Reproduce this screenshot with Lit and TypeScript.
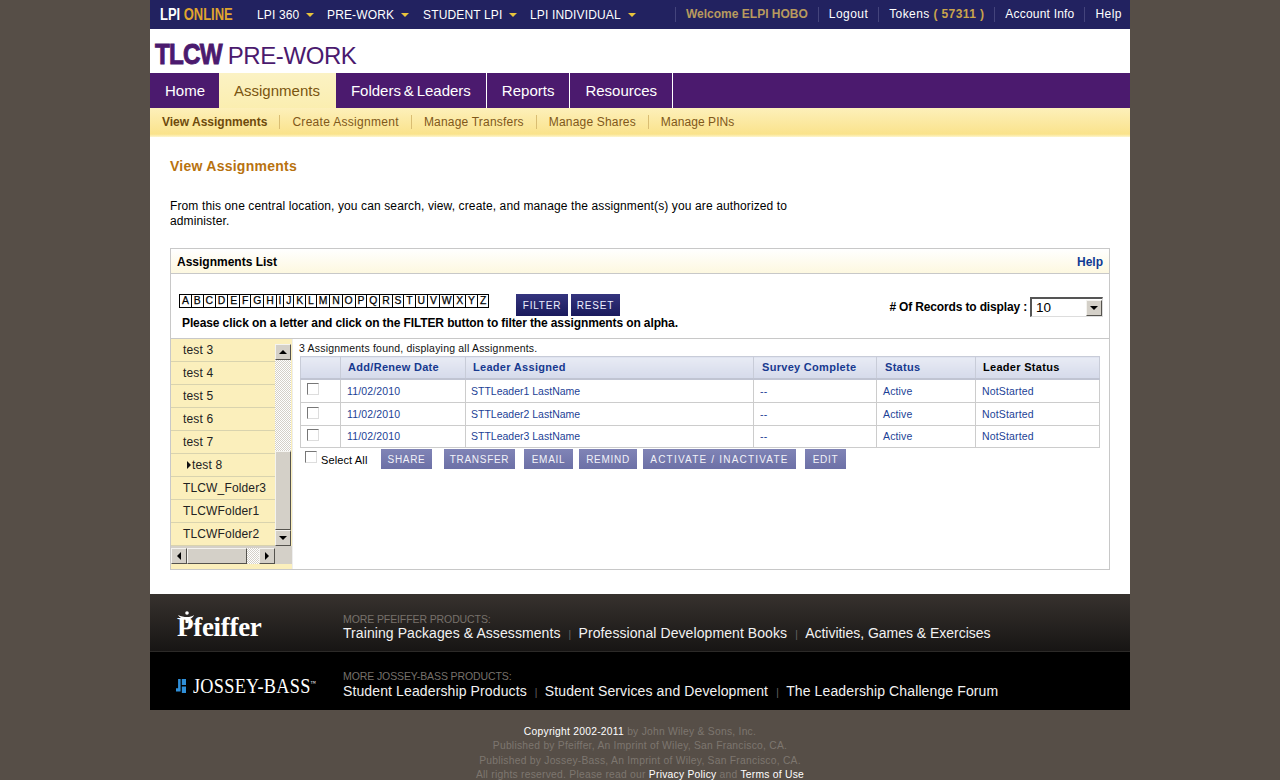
import { css, html, LitElement } from "lit";
import { customElement } from "lit/decorators.js";

const LETTERS = "ABCDEFGHIJKLMNOPQRSTUVWXYZ".split("");
const FOLDERS = ["test 3", "test 4", "test 5", "test 6", "test 7", "test 8", "TLCW_Folder3", "TLCWFolder1", "TLCWFolder2"];
const LEADERS = ["STTLeader1 LastName", "STTLeader2 LastName", "STTLeader3 LastName"];

@customElement("app-root")
export class AppRoot extends LitElement {
	static override styles = css`
		:host {
			display: block;
			height: 780px;
			overflow: hidden;
			background: #564e47;
			font-family: "Liberation Sans", Arial, sans-serif;
			font-size: 12px;
			color: #000;
		}

		.page {
			width: 980px;
			margin-left: 150px;
		}

		/* top bar */
		.topbar {
			height: 29px;
			background: #222260;
			display: flex;
			align-items: center;
			color: #fff;
			letter-spacing: 0.45px;
		}
		.brand {
			width: 107px;
			flex: none;
			padding-left: 10px;
			box-sizing: border-box;
			white-space: nowrap;
		}
		.brand span {
			display: inline-block;
			font-weight: bold;
			font-size: 16px;
			letter-spacing: 0;
			transform: scaleX(0.81);
			transform-origin: left center;
		}
		.brand b {
			color: #e0a52e;
		}
		.topnav {
			display: flex;
			width: 418px;
			flex: none;
			letter-spacing: 0.15px;
		}
		.topnav span {
			display: flex;
			align-items: center;
			white-space: nowrap;
		}
		.topnav span:nth-child(1) { width: 70px; }
		.topnav span:nth-child(2) { width: 96px; }
		.topnav span:nth-child(3) { width: 107px; }
		.caret {
			width: 0;
			height: 0;
			margin-left: 7px;
			border: 4.5px solid transparent;
			border-top: 4.5px solid #e8c33c;
			border-bottom: 0;
		}
		.topright {
			display: flex;
			align-items: center;
			white-space: nowrap;
		}
		.topright span {
			padding: 0 10px;
			border-left: 1px solid #44447c;
			line-height: 15px;
		}
		.topright .welcome {
			color: #b89a5e;
			font-weight: bold;
			letter-spacing: 0;
		}
		.topright .tokens {
			letter-spacing: 0.4px;
		}
		.topright .account {
			letter-spacing: 0.2px;
		}
		.topright em {
			font-style: normal;
			font-weight: bold;
			color: #c9a44c;
		}

		/* logo strip */
		.logo {
			height: 44px;
			background: #fff;
			display: flex;
			align-items: baseline;
			padding: 8px 0 0 5px;
			box-sizing: border-box;
			color: #4b1a6e;
			white-space: nowrap;
		}
		.logo b {
			display: inline-block;
			font-size: 30px;
			letter-spacing: -1px;
			margin-right: -10px;
			-webkit-text-stroke: 1px #4b1a6e;
			transform: scaleX(0.807);
			transform-origin: left center;
		}
		.logo span {
			font-size: 24px;
			letter-spacing: -0.4px;
		}

		/* main nav */
		.nav {
			height: 35px;
			background: #4b1a6e;
			display: flex;
		}
		.nav a {
			color: #fff;
			font-size: 15px;
			line-height: 35px;
			padding: 0 15px;
			word-spacing: -1.3px;
			border-right: 1px solid #fff;
		}
		.nav a.home {
			border-right: 0;
			padding-right: 14px;
		}
		.nav a.active {
			border-right: 0;
			padding-right: 16px;
			color: #7a5510;
			background: linear-gradient(#fbf2c4, #fbeeb0);
		}
		.subnav {
			height: 29px;
			display: flex;
			align-items: center;
			padding: 0 0 2px 12px;
			box-sizing: border-box;
			background: linear-gradient(#fdf0ba 0, #fae38c 90%, #fdf6cf 100%);
			color: #80581a;
			white-space: nowrap;
		}
		.subnav span {
			padding-right: 12px;
			margin-right: 12px;
			border-right: 1px solid #d9bd72;
			line-height: 14px;
			letter-spacing: 0.12px;
		}
		.subnav span:nth-child(2) {
			letter-spacing: 0.3px;
		}
		.subnav span:nth-child(3) {
			letter-spacing: 0.2px;
		}
		.subnav span:nth-child(4) {
			letter-spacing: 0.18px;
		}
		.subnav span:last-child {
			border: 0;
			letter-spacing: 0.08px;
		}
		.subnav .on {
			font-weight: bold;
			color: #6e4a0c;
			letter-spacing: 0;
		}

		/* content */
		.content {
			background: #fff;
			height: 457px;
			padding: 21px 20px 0;
			box-sizing: border-box;
		}
		h1 {
			margin: 0;
			font-size: 14px;
			line-height: 16px;
			color: #b8720f;
			letter-spacing: 0.25px;
		}
		.intro {
			margin: 25px 0 0;
			width: 640px;
			line-height: 15px;
			letter-spacing: 0.12px;
		}
		.panel {
			margin-top: 19px;
			border: 1px solid #c8c8c8;
			height: 322px;
			box-sizing: border-box;
			display: flex;
			flex-direction: column;
		}
		.panel-head {
			height: 25px;
			flex: none;
			box-sizing: border-box;
			padding: 1px 6px 0;
			display: flex;
			align-items: center;
			justify-content: space-between;
			font-weight: bold;
			background: linear-gradient(#fff, #fdf8e0);
			border-bottom: 1px solid #c8c8c8;
		}
		.panel-head a {
			color: #0f3a94;
		}
		.filter {
			height: 65px;
			flex: none;
			box-sizing: border-box;
			border-bottom: 1px solid #c8c8c8;
			display: grid;
			grid-template-columns: 1fr auto;
			padding: 20px 6px 0 8px;
		}
		.alpha-row {
			display: flex;
			align-items: flex-start;
		}
		.alpha {
			display: flex;
			width: 310px;
			flex: none;
			box-sizing: border-box;
			border-right: 1px solid #000;
		}
		.alpha i {
			flex: auto;
			text-align: center;
			font-style: normal;
			border: 1px solid #000;
			border-right: 0;
			font-size: 10.4px;
			line-height: 12px;
			padding: 0 1.8px;
			-webkit-text-stroke: 0.25px #000;
		}
		.dark {
			height: 22px;
			line-height: 23px;
			text-align: center;
			color: #eef;
			font-size: 10px;
			letter-spacing: 0.8px;
			background: linear-gradient(#34347e, #1a1a5c);
		}
		.dark.first {
			width: 52px;
			margin-left: 27px;
		}
		.dark.second {
			width: 49px;
			margin-left: 3px;
		}
		.hint {
			margin: 0 0 0 3px;
			font-weight: bold;
			line-height: 15px;
			letter-spacing: -0.11px;
			white-space: nowrap;
		}
		.records {
			display: flex;
			align-items: center;
			font-weight: bold;
			height: 20px;
			margin-top: 3px;
			letter-spacing: -0.15px;
		}
		.select {
			width: 73px;
			height: 20px;
			margin-left: 3px;
			box-sizing: border-box;
			border-style: solid;
			border-width: 2px 1px 1px 2px;
			border-color: #555 #ddd #ddd #555;
			display: flex;
			align-items: center;
			justify-content: space-between;
			padding: 0 0 0 4px;
			font-weight: normal;
			font-size: 13.5px;
			letter-spacing: 0;
		}

		/* lower part */
		.lower {
			flex: 1;
			display: flex;
			min-height: 0;
		}
		.side {
			width: 122px;
			flex: none;
			background: #fbefbc;
			border-right: 1px solid #eee;
			box-sizing: border-box;
		}
		.side-top {
			display: flex;
			height: 207px;
		}
		.folders {
			width: 104px;
			flex: none;
		}
		.folders div {
			height: 23px;
			box-sizing: border-box;
			border-bottom: 1px solid #d9d3ae;
			padding-left: 12px;
			line-height: 22px;
			letter-spacing: 0.15px;
			color: #222;
			display: flex;
			align-items: center;
		}
		.folders .cur {
			padding-left: 16px;
		}
		.folders .cur::before {
			content: "";
			margin-right: 1px;
			border: 4px solid transparent;
			border-left: 4px solid #111;
			border-right: 0;
		}
		.vbar {
			width: 16px;
			flex: none;
			display: flex;
			flex-direction: column;
		}
		.vgap {
			height: 5px;
			flex: none;
		}
		.sb-btn {
			width: 16px;
			height: 16px;
			flex: none;
			box-sizing: border-box;
			background: #d4d0c8;
			border: 1px solid;
			border-color: #f4f3ef #55534e #55534e #f4f3ef;
			display: flex;
			align-items: center;
			justify-content: center;
		}
		.tri-u, .tri-d, .tri-l, .tri-r {
			width: 0;
			height: 0;
			border: 4px solid transparent;
		}
		.tri-u { border-top: 0; border-bottom-color: #000; }
		.tri-d { border-bottom: 0; border-top-color: #000; }
		.tri-l { border-left: 0; border-right-color: #000; }
		.tri-r { border-right: 0; border-left-color: #000; }
		.track {
			background: repeating-conic-gradient(#d4d0c8 0 25%, #fff 0 50%) 0 0 / 2px 2px;
		}
		.vtrack {
			height: 91px;
			flex: none;
		}
		.thumb {
			background: #d4d0c8;
			box-sizing: border-box;
			border: 1px solid;
			border-color: #f4f3ef #55534e #55534e #f4f3ef;
		}
		.vthumb {
			height: 79px;
			flex: none;
		}
		.hbar {
			display: flex;
			align-items: flex-end;
			height: 18px;
			background: #d4d0c8;
			width: 121px;
		}
		.hthumb {
			width: 60px;
			height: 16px;
		}
		.htrack {
			width: 12px;
			height: 16px;
		}
		.main {
			flex: 1;
			padding: 3px 9px 0 7px;
			min-width: 0;
		}
		.found {
			font-size: 10.5px;
			line-height: 13px;
			letter-spacing: 0.2px;
			color: #111;
			margin-left: -1px;
		}
		table {
			border-collapse: collapse;
			table-layout: fixed;
			width: 799px;
			margin-top: 1px;
			font-size: 10.5px;
		}
		th {
			height: 22px;
			padding: 0 0 0 7px;
			box-sizing: border-box;
			text-align: left;
			font-size: 11px;
			letter-spacing: 0.3px;
			color: #17398f;
			border: 1px solid #c8ccd8;
			border-bottom: 2px solid #c0c4d2;
			background: linear-gradient(#e8ebf5, #d5daea);
		}
		th.c3, th.c4 {
			padding-left: 8px;
		}
		th.black {
			color: #000;
		}
		td {
			height: 23px;
			padding: 0 0 0 6px;
			box-sizing: border-box;
			color: #1c3f96;
			border: 1px solid #ccc;
			white-space: nowrap;
			letter-spacing: 0.15px;
		}
		td.name {
			padding-left: 5px;
			letter-spacing: 0;
		}
		tbody tr:first-child td {
			height: 24px;
		}
		tbody tr:last-child td {
			height: 22px;
			padding-bottom: 1px;
		}
		.c0 { width: 40px; }
		.c1 { width: 125px; }
		.c2 { width: 288px; }
		.c3 { width: 123px; }
		.c4 { width: 99px; }
		.c5 { width: 124px; }
		.box {
			display: block;
			width: 12px;
			height: 12px;
			box-sizing: border-box;
			border: 1px solid;
			border-color: #777 #ddd #ddd #777;
			background: #fff;
			margin-bottom: 3px;
		}
		.actions {
			display: flex;
			align-items: center;
			margin: 1px 0 0 5px;
			height: 20px;
		}
		.actions .box {
			margin: 0 4px 5px 0;
		}
		.actions label {
			font-size: 11px;
			width: 60px;
			flex: none;
			letter-spacing: 0.12px;
			padding-top: 2px;
		}
		.act {
			height: 20px;
			line-height: 21px;
			box-sizing: border-box;
			text-align: center;
			background: linear-gradient(#8084b6, #6c70a6);
			color: #f2f2f8;
			font-size: 10px;
			letter-spacing: 0.7px;
			white-space: nowrap;
		}
		.a1 { width: 51px; }
		.a2 { width: 71px; margin-left: 12px; }
		.a3 { width: 49px; margin-left: 9px; }
		.a4 { width: 58px; margin-left: 6px; }
		.a5 { width: 153px; margin-left: 6px; letter-spacing: 1.2px; }
		.a6 { width: 41px; margin-left: 9px; }

		/* footer */
		.band {
			height: 58px;
			display: flex;
			box-sizing: border-box;
			color: #fff;
		}
		.band.one {
			background: linear-gradient(#37322e, #171514);
			border-bottom: 1px solid #2c2a28;
		}
		.band.two {
			background: #000;
		}
		.band-logo {
			width: 193px;
			flex: none;
			display: flex;
			align-items: center;
			box-sizing: border-box;
		}
		.pf {
			font-family: "Liberation Serif", serif;
			font-weight: bold;
			font-size: 27px;
			margin: 10px 0 0 27px;
			position: relative;
			letter-spacing: -0.3px;
		}
		.pf svg {
			position: absolute;
			left: 0;
			top: -1px;
		}
		.jb {
			font-family: "Liberation Serif", serif;
			font-size: 21px;
			padding-left: 26px;
			display: flex;
			align-items: center;
			white-space: nowrap;
			margin-top: 10px;
		}
		.jb svg {
			margin-right: 7px;
			flex: none;
		}
		.jb span {
			display: inline-block;
			letter-spacing: 0.3px;
			transform: scaleX(0.87);
			transform-origin: left center;
		}
		.jb sup {
			font-size: 6px;
		}
		.band-links {
			padding-top: 20px;
		}
		.two .band-links {
			padding-top: 19px;
		}
		.band-links small {
			display: block;
			font-size: 10.5px;
			line-height: 11px;
			letter-spacing: -0.1px;
			color: #77716b;
		}
		.band-links p {
			margin: 0;
			display: flex;
			font-size: 14px;
			line-height: 16px;
			white-space: nowrap;
			letter-spacing: 0.08px;
			color: #f2f2f2;
		}
		.band-links .tight {
			letter-spacing: -0.02px;
		}
		.two .band-links p {
			margin-top: 1px;
			letter-spacing: 0.12px;
		}
		.band-links i {
			font-style: normal;
			font-size: 10px;
			color: #666;
			margin: 0 8px;
			width: 2px;
			text-align: center;
			padding-top: 2px;
		}
		.copy {
			padding-top: 15px;
			text-align: center;
			font-size: 10.3px;
			line-height: 14.3px;
			color: #7d766f;
			letter-spacing: 0.25px;
		}
		.copy b {
			font-weight: normal;
			color: #fff;
		}
	`;

	override render() {
		return html`
			<div class="page">
				<div class="topbar">
					<div class="brand"><span>LPI <b>ONLINE</b></span></div>
					<div class="topnav">
						<span>LPI 360<i class="caret"></i></span>
						<span>PRE-WORK<i class="caret"></i></span>
						<span>STUDENT LPI<i class="caret"></i></span>
						<span>LPI INDIVIDUAL<i class="caret"></i></span>
					</div>
					<div class="topright">
						<span class="welcome">Welcome ELPI HOBO</span>
						<span>Logout</span>
						<span class="tokens">Tokens <em>( 57311 )</em></span>
						<span class="account">Account Info</span>
						<span>Help</span>
					</div>
				</div>
				<div class="logo"><b>TLCW</b><span>PRE-WORK</span></div>
				<div class="nav">
					<a class="home">Home</a>
					<a class="active">Assignments</a>
					<a>Folders &amp; Leaders</a>
					<a>Reports</a>
					<a>Resources</a>
				</div>
				<div class="subnav">
					<span class="on">View Assignments</span>
					<span>Create Assignment</span>
					<span>Manage Transfers</span>
					<span>Manage Shares</span>
					<span>Manage PINs</span>
				</div>
				<div class="content">
					<h1>View Assignments</h1>
					<p class="intro">
						From this one central location, you can search, view, create, and manage the assignment(s) you are authorized to administer.
					</p>
					<div class="panel">
						<div class="panel-head"><span>Assignments List</span><a>Help</a></div>
						<div class="filter">
							<div>
								<div class="alpha-row">
									<div class="alpha">${LETTERS.map((l) => html`<i>${l}</i>`)}</div>
									<div class="dark first">FILTER</div>
									<div class="dark second">RESET</div>
								</div>
								<div class="hint">Please click on a letter and click on the FILTER button to filter the assignments on alpha.</div>
							</div>
							<div class="records">
								# Of Records to display :
								<div class="select">
									10
									<div class="sb-btn"><i class="tri-d"></i></div>
								</div>
							</div>
						</div>
						<div class="lower">
							<div class="side">
								<div class="side-top">
									<div class="folders">
										${FOLDERS.map((f) => html`<div class=${f === "test 8" ? "cur" : ""}>${f}</div>`)}
									</div>
									<div class="vbar">
										<div class="vgap"></div>
										<div class="sb-btn"><i class="tri-u"></i></div>
										<div class="track vtrack"></div>
										<div class="thumb vthumb"></div>
										<div class="sb-btn"><i class="tri-d"></i></div>
									</div>
								</div>
								<div class="hbar">
									<div class="sb-btn"><i class="tri-l"></i></div>
									<div class="thumb hthumb"></div>
									<div class="track htrack"></div>
									<div class="sb-btn"><i class="tri-r"></i></div>
								</div>
							</div>
							<div class="main">
								<div class="found">3 Assignments found, displaying all Assignments.</div>
								<table>
									<thead>
										<tr>
											<th class="c0"></th>
											<th class="c1">Add/Renew Date</th>
											<th class="c2">Leader Assigned</th>
											<th class="c3">Survey Complete</th>
											<th class="c4">Status</th>
											<th class="c5 black">Leader Status</th>
										</tr>
									</thead>
									<tbody>
										${LEADERS.map(
											(name) => html`
												<tr>
													<td><span class="box"></span></td>
													<td>11/02/2010</td>
													<td class="name">${name}</td>
													<td>--</td>
													<td>Active</td>
													<td>NotStarted</td>
												</tr>
											`,
										)}
									</tbody>
								</table>
								<div class="actions">
									<span class="box"></span>
									<label>Select All</label>
									<div class="act a1">SHARE</div>
									<div class="act a2">TRANSFER</div>
									<div class="act a3">EMAIL</div>
									<div class="act a4">REMIND</div>
									<div class="act a5">ACTIVATE / INACTIVATE</div>
									<div class="act a6">EDIT</div>
								</div>
							</div>
						</div>
					</div>
				</div>
				<div class="band one">
					<div class="band-logo">
						<div class="pf">
							<svg width="18" height="12" viewBox="0 0 18 12">
								<circle cx="10" cy="2" r="1.8" fill="#fff"></circle>
								<path d="M1 4c3 1.6 6 2 9 2s5-.6 7-2c-1 2.600-3 4-5.500 4.600V12H8.500V8.600C5 8 2.500 6.500 1 4z" fill="#fff"></path>
							</svg>
							Pfeiffer
						</div>
					</div>
					<div class="band-links">
						<small>MORE PFEIFFER PRODUCTS:</small>
						<p>Training Packages &amp; Assessments<i>|</i>Professional Development Books<i>|</i><span class="tight">Activities, Games &amp; Exercises</span></p>
					</div>
				</div>
				<div class="band two">
					<div class="band-logo">
						<div class="jb">
							<svg width="10" height="14" viewBox="0 0 12 15" preserveAspectRatio="none">
								<path d="M0 10h2.500V0h3v13.500H0z" fill="#2f8fd8"></path>
								<path d="M7 0h5v6.500H7zM7 8h5v7H7z" fill="#2f8fd8"></path>
							</svg>
							<span>JOSSEY-BASS<sup>™</sup></span>
						</div>
					</div>
					<div class="band-links">
						<small>MORE JOSSEY-BASS PRODUCTS:</small>
						<p>Student Leadership Products<i>|</i>Student Services and Development<i>|</i>The Leadership Challenge Forum</p>
					</div>
				</div>
				<div class="copy">
					<b>Copyright 2002-2011</b> by John Wiley &amp; Sons, Inc.<br />
					Published by Pfeiffer, An Imprint of Wiley, San Francisco, CA.<br />
					Published by Jossey-Bass, An Imprint of Wiley, San Francisco, CA.<br />
					All rights reserved. Please read our <b>Privacy Policy</b> and <b>Terms of Use</b>
				</div>
			</div>
		`;
	}
}
